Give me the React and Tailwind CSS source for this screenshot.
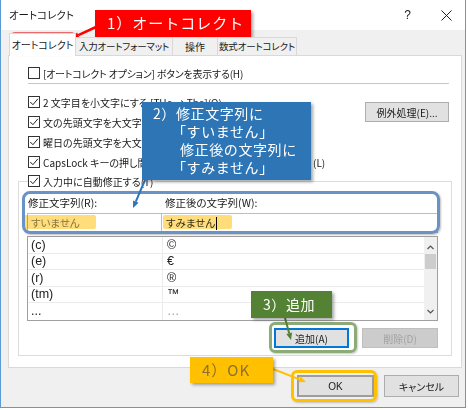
import React from "react";

function Check({ checked }) {
  return (
    <span className="w-[12px] h-[12px] border border-[#333333] bg-white flex items-center justify-center shrink-0">
      {checked && (
        <svg width="10" height="10" viewBox="0 0 10 10">
          <path d="M1.3 5 L3.9 7.7 L8.9 1.8" fill="none" stroke="#222" strokeWidth="1" />
        </svg>
      )}
    </span>
  );
}

function Row({ checked, children }) {
  return (
    <div className="flex items-center h-[20px] gap-[3px] whitespace-nowrap">
      <Check checked={checked} />
      {children}
    </div>
  );
}

export default function App() {
  const rows = [
    ["(c)", "©"],
    ["(e)", "€"],
    ["(r)", "®"],
    ["(tm)", "™"],
    ["...", "…"],
  ];
  return (
    <div className="relative w-[468px] h-[410px] bg-white overflow-hidden font-['Noto_Sans_CJK_JP',sans-serif] text-[10px] text-[#1a1a1a] [font-feature-settings:'palt']">
      <div className="w-[466px] h-[408px] border-x border-b border-[#5b9bd5] bg-[#f0f0f0] flex flex-col">
        {/* title bar */}
        <div className="h-[30px] bg-white flex items-center pl-[8px] pr-[13px] shrink-0">
          <span className="text-[10.5px]">オートコレクト</span>
          <span className="ml-auto mr-[30px] text-[12px] font-['Liberation_Sans',sans-serif] text-[#222]">?</span>
          <svg width="11" height="11" viewBox="0 0 11 11">
            <path d="M0.5 0.5 L10.5 10.5 M10.5 0.5 L0.5 10.5" stroke="#222" strokeWidth="1" />
          </svg>
        </div>

        <div className="pl-[7px] flex flex-col flex-1">
          {/* tabs */}
          <div className="flex items-end h-[25px] pl-[1px] relative z-10 shrink-0 whitespace-nowrap">
            <div className="w-[67px] h-[23px] -mb-px bg-white border-x border-t border-[#d9d9d9] flex items-center justify-center pb-[1px]">
              オートコレクト
            </div>
            <div className="w-[97px] h-[18px] border-t border-r border-[#d9d9d9] flex items-center justify-center bg-[#f0f0f0] text-[9.5px] tracking-[-0.2px]">
              入力オートフォーマット
            </div>
            <div className="w-[45px] h-[18px] border-t border-r border-[#d9d9d9] flex items-center justify-center bg-[#f0f0f0]">
              操作
            </div>
            <div className="w-[79px] h-[18px] border-t border-r border-[#d9d9d9] flex items-center justify-center bg-[#f0f0f0] text-[9.5px] tracking-[-0.2px]">
              数式オートコレクト
            </div>
          </div>

          {/* panel */}
          <div className="w-[454px] h-[313px] bg-white border border-[#d9d9d9] flex flex-col pt-[7px] shrink-0">
            <div className="ml-[19px]">
              <Row checked={false}>
                <span className="tracking-[-0.2px]">[オートコレクト オプション] ボタンを表示する(H)</span>
              </Row>
            </div>
            <div className="ml-[19px] w-[421px] h-px bg-[#c6c6c6]" />

            <div className="mt-[8px] flex justify-between">
              <div className="ml-[19px] flex flex-col">
                <Row checked>
                  <span>2 文字目を小文字にする [THe → The](O)</span>
                </Row>
                <Row checked>
                  <span>文の先頭文字を大文字にする [the → The](S)</span>
                </Row>
                <Row checked>
                  <span>曜日の先頭文字を大文字にする(N)</span>
                </Row>
                <Row checked>
                  <span className="w-[270px] overflow-hidden">CapsLock キーの押し間違いを修正する</span>
                  <span className="-ml-[3px]">(L)</span>
                </Row>
              </div>
              <button className="mt-[10px] mr-[12px] w-[84px] h-[20px] bg-[#e1e1e1] border border-[#adadad] flex items-center justify-center text-[10px]">
                例外処理(E)...
              </button>
            </div>

            {/* group */}
            <div className="mt-[9px] ml-[9px] w-[434px] border border-[#dcdcdc] flex flex-col pl-[8px] pr-[13px] pb-[7px]">
              <div className="-mt-[8px] ml-[1px] self-start bg-white pr-[2px] flex items-center h-[14px] gap-[3px] whitespace-nowrap">
                <Check checked />
                <span>入力中に自動修正する(T)</span>
              </div>
              <div className="mt-[7px] h-[16px] flex items-center text-[10.5px]">
                <div className="w-[135px] pl-[1px]">修正文字列(R):</div>
                <div className="pl-[3px]">修正後の文字列(W):</div>
              </div>
              <div className="mt-[2px] h-[20px] flex">
                <div className="w-[135px] h-full border border-[#bdbdbd] bg-white flex items-center pl-[3px] text-[#8a8a8a] text-[10.5px]">
                  すいません
                </div>
                <div className="flex-1 h-full border-y border-r border-[#bdbdbd] bg-white flex items-center pl-[4px] text-[#333] text-[10.5px]">
                  すみません
                  <span className="w-px h-[13px] bg-black ml-[1px]" />
                </div>
              </div>
              <div className="mt-[3px] h-[85px] border border-[#a0a0a0] bg-white flex">
                <div className="flex-1 flex flex-col font-['Liberation_Sans',sans-serif] text-[12.5px] text-[#222]">
                  {rows.map(([a, b], i) => (
                    <div key={i} className={`h-[16.6px] flex ${i < 4 ? "border-b border-[#ebebeb]" : ""}`}>
                      <div className="w-[135px] border-r border-[#ebebeb] pl-[3px] flex items-center leading-none">{a}</div>
                      <div className={`pl-[4px] flex items-center leading-none ${i === 4 ? "text-[#a0a0a0]" : ""}`}>{b}</div>
                    </div>
                  ))}
                </div>
                <div className="w-[13px] bg-[#f0f0f0] flex flex-col items-center">
                  <svg className="mt-[8px]" width="7" height="5" viewBox="0 0 7 5">
                    <path d="M0.5 4 L3.5 1 L6.5 4" fill="none" stroke="#555" strokeWidth="1.2" />
                  </svg>
                  <div className="mt-[4px] w-[11px] h-[15px] bg-[#cdcdcd]" />
                  <svg className="mt-auto mb-[6px]" width="7" height="5" viewBox="0 0 7 5">
                    <path d="M0.5 1 L3.5 4 L6.5 1" fill="none" stroke="#555" strokeWidth="1.2" />
                  </svg>
                </div>
              </div>
              <div className="mt-[7px] flex justify-end gap-[13px]">
                <button className="w-[75px] h-[20px] bg-[#e1e1e1] border-2 border-[#0078d7] flex items-center justify-center text-[10px]">
                  追加(A)
                </button>
                <button className="w-[76px] h-[20px] bg-[#cccccc] border border-[#bfbfbf] flex items-center justify-center text-[10px] text-[#a2a2a2]">
                  削除(D)
                </button>
              </div>
            </div>
          </div>

          {/* bottom buttons */}
          <div className="mt-[7px] flex justify-end gap-[10px] pr-[6px]">
            <button className="w-[77px] h-[22px] bg-[#e1e1e1] border-2 border-[#9d9d9d] flex items-center justify-center text-[10px] font-['Liberation_Sans',sans-serif]">
              OK
            </button>
            <button className="w-[75px] h-[22px] bg-[#e1e1e1] border border-[#adadad] flex items-center justify-center text-[10px]">
              キャンセル
            </button>
          </div>
        </div>
      </div>

      {/* ---- overlays ---- */}
      {/* yellow marker highlights */}
      <div className="absolute left-[24px] top-[215px] w-[72px] h-[14px] bg-[#ffd24d] opacity-75 mix-blend-multiply rounded-[2px]" />
      <div className="absolute left-[163px] top-[215px] w-[69px] h-[14px] bg-[#ffd24d] opacity-75 mix-blend-multiply rounded-[2px]" />

      {/* rings */}
      <div className="absolute left-[10px] top-[32px] w-[66px] h-[22px] border-[3px] border-[#ea6b6b] rounded-[5px] shadow-[1px_1px_2px_rgba(0,0,0,0.25)]" />
      <div className="absolute left-[22px] top-[191px] w-[418px] h-[43px] border-[3px] border-[#6a92c4] rounded-[8px] shadow-[1px_1px_2px_rgba(0,0,0,0.25)]" />
      <div className="absolute left-[269px] top-[322px] w-[88px] h-[31px] border-[3px] border-[#8dab78] rounded-[6px] shadow-[1px_1px_2px_rgba(0,0,0,0.2)]" />
      <div className="absolute left-[291px] top-[370px] w-[86px] h-[32px] border-[3px] border-[#ffc000] rounded-[6px] shadow-[1px_1px_2px_rgba(0,0,0,0.2)]" />

      {/* arrows */}
      <svg className="absolute left-0 top-0 pointer-events-none" width="468" height="410" viewBox="0 0 468 410">
        <line x1="96" y1="27" x2="78.4" y2="35.1" stroke="#ff0000" strokeWidth="2.5" />
        <polygon points="72,38 79.6,37.8 77.1,32.4" fill="#ff0000" />
        <line x1="145" y1="180" x2="135.8" y2="201.6" stroke="#2e75b6" strokeWidth="2" />
        <polygon points="133,208 138.6,202.8 133.1,200.4" fill="#2e75b6" />
        <line x1="285" y1="318" x2="289.2" y2="333.2" stroke="#548235" strokeWidth="2" />
        <polygon points="291,340 292.1,332.4 286.3,334" fill="#548235" />
        <line x1="273" y1="369" x2="299.5" y2="379.4" stroke="#ffc000" strokeWidth="2" />
        <polygon points="306,382 298.4,382.2 300.6,376.6" fill="#ffc000" />
      </svg>

      {/* callouts */}
      <div className="absolute left-[95px] top-[10px] w-[156px] h-[27px] bg-[#ff0000] shadow-[2px_2px_3px_rgba(0,0,0,0.35)] flex items-center pl-[12px] text-white text-[15px] tracking-[1px] [font-feature-settings:normal] whitespace-nowrap">
        1）オートコレクト
      </div>
      <div className="absolute left-[142px] top-[102px] w-[169px] h-[78px] bg-[#2e75b6] shadow-[2px_2px_3px_rgba(0,0,0,0.35)] flex flex-col pt-[2px] text-white text-[14px] leading-[18px] tracking-[0.6px] [font-feature-settings:normal] whitespace-nowrap">
        <div className="pl-[11px]">2）修正文字列に</div>
        <div className="pl-[30px]">「すいません」</div>
        <div className="pl-[38px]">修正後の文字列に</div>
        <div className="pl-[30px]">「すみません」</div>
      </div>
      <div className="absolute left-[251px] top-[291px] w-[81px] h-[27px] bg-[#548235] shadow-[2px_2px_3px_rgba(0,0,0,0.35)] flex items-center pl-[12px] text-white text-[14px] tracking-[0.6px] [font-feature-settings:normal] whitespace-nowrap">
        3）追加
      </div>
      <div className="absolute left-[190px] top-[357px] w-[83px] h-[26px] bg-[#ffc000] shadow-[2px_2px_3px_rgba(0,0,0,0.35)] flex items-center pl-[12px] text-[#8c7034] text-[15px] tracking-[1px] [font-feature-settings:normal] whitespace-nowrap">
        4）OK
      </div>
    </div>
  );
}
